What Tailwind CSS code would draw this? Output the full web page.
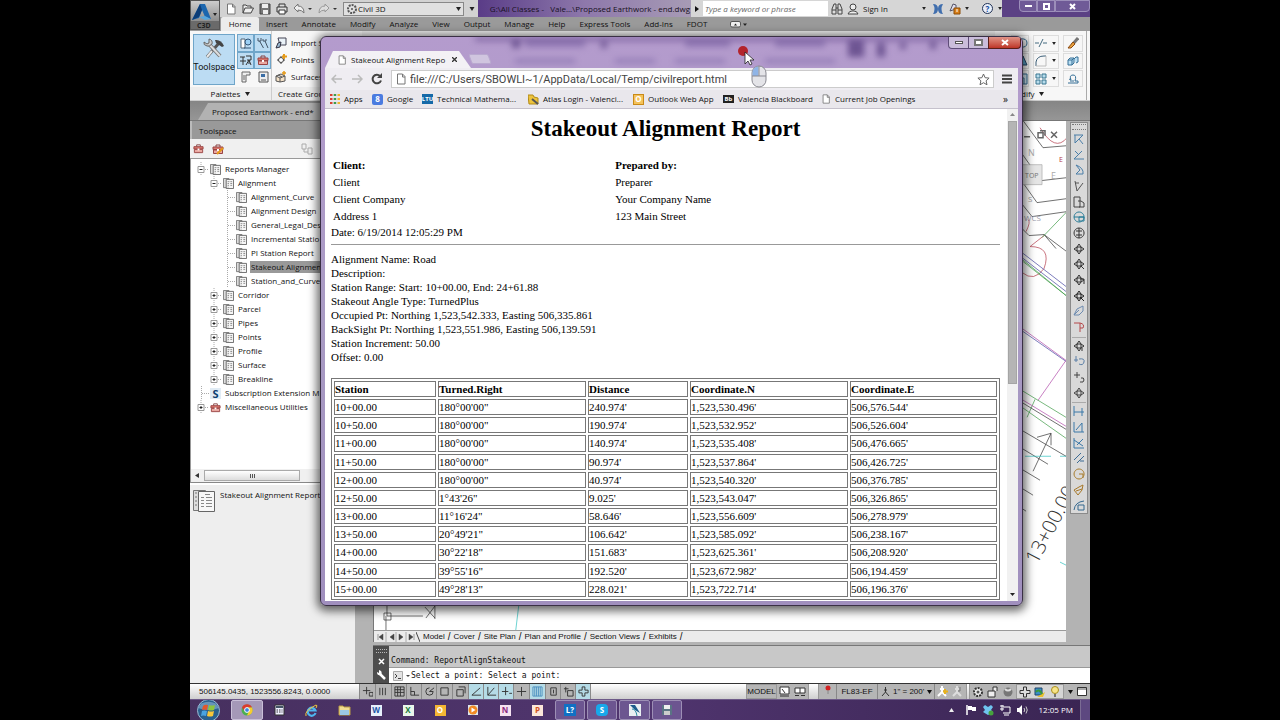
<!DOCTYPE html>
<html lang="en">

<head>
    <meta charset="UTF-8">
    <meta name="viewport" content="width=device-width, initial-scale=1.0">
    <title>Stakeout Alignment Report</title>
    <script src="https://cdn.jsdelivr.net/npm/@tailwindcss/browser@4"></script>
</head>

<body class="bg-black h-screen px-[190px] overflow-hidden font-['Open_Sans','Noto_Sans',sans-serif] text-[8px] leading-none text-[#111]">

    <!-- icon sprites -->
    <svg class="hidden" xmlns="http://www.w3.org/2000/svg">
        <symbol id="page" viewBox="0 0 12 12"><path d="M2.500 1h5L10 3.500V11H2.500zM7.500 1v3H10" fill="#fff" stroke="#777" /></symbol>
        <symbol id="report" viewBox="0 0 12 12"><path d="M.5 .5h6v10h-6z" fill="#ddd" stroke="#777" /><path d="M3.500 1.500h8v10h-8z" fill="#f6f6f6" stroke="#666" /><path d="M5 4h2M8 4h2M5 6h1.500M8 6h2M5 8h1.500M8 8h2M5 10h1" stroke="#888" /></symbol>
        <symbol id="toolbox" viewBox="0 0 12 12"><path d="M4 4V2h4v2" fill="none" stroke="#844" /><path d="M1 4h10v2.500H1z" fill="#d9766c" stroke="#944" /><path d="M1.500 7h9v3.500h-9z" fill="#eaa9a2" stroke="#944" /><path d="M5 6h2v2H5z" fill="#fff" /></symbol>
        <symbol id="cubes" viewBox="0 0 12 12"><path d="M1 5l2-2h4v5l-2 2H1zM1 5h4v5M5 5l2-2M7 4l2-2h2v5l-2 1" fill="#b9def2" stroke="#356f96" /></symbol>
        <symbol id="arc" viewBox="0 0 12 12"><path d="M1 11V7Q2 1 9 1h2" fill="none" stroke="#3c5f78" /><path d="M1 11h10V1" fill="none" stroke="#bbb" /></symbol>
        <symbol id="dash" viewBox="0 0 12 12"><path d="M0 6h4M8 6h4M4 10L8 2" stroke="#456a80" fill="none" /></symbol>
        <symbol id="array" viewBox="0 0 12 12"><path d="M1 1h4v4H1zM7 1h4v4H7zM1 7h4v4H1zM7 7h4v4H7z" fill="#b7dcec" stroke="#3b7690" /></symbol>
        <symbol id="offset" viewBox="0 0 12 12"><path d="M1 10h10V8H8q2-6-2-6T4 7L2 6M3 8h4" fill="none" stroke="#346f96" /></symbol>
    </svg>

    <main class="relative flex flex-col h-full overflow-hidden bg-[#b3b3b3]">

        <!-- title bar, quick access and ribbon tabs -->
        <header class="flex shrink-0 h-[31px] bg-[#9c9c9c]">
            <button type="button" aria-label="Application menu" class="w-[30px] h-[30px] shrink-0 flex items-center justify-center border border-[#555] bg-linear-to-b from-[#ccc] to-[#777]">
                <svg class="w-[28px] h-[28px]" viewBox="0 0 28 28">
                    <path d="M9 3h5l6 15h-5l-4-9-3 8-7 2z" fill="#1b66ae" />
                    <path d="M9 3l-8 16 7-3 3-7z" fill="#0c3d77" />
                    <path d="M8 16l6-1 6 3-6 1z" fill="#59a7dc" />
                    <path d="M22 12h4l-2 3z" fill="#222" />
                    <path d="M0 20h28v8H0z" fill="#6a6a6a" />
                    <text x="6" y="27" font-size="7" font-weight="700" fill="#222">C3D</text>
                </svg>
            </button>
            <div class="flex-1 min-w-0 flex flex-col">
                <div class="flex h-[17px] bg-[#5b4184]">
                    <div class="flex items-center gap-[5px] w-[258px] shrink-0 pl-[5px] bg-[#d2d2d2]">
                        <button type="button" aria-label="New"><svg class="size-3" viewBox="0 0 12 12"><use href="#page" /></svg></button>
                        <button type="button" aria-label="Open"><svg class="size-3" viewBox="0 0 12 12"><path d="M1 10V2h3l1 1h4v2M1 10l2-5h8.500l-2.500 5z" fill="#eee" stroke="#444" /></svg></button>
                        <button type="button" aria-label="Save"><svg class="size-3" viewBox="0 0 12 12"><path d="M1 1h10v10H1z" fill="#777" stroke="#444" /><path d="M3 1h6v4H3zM4 7h5v4H4z" fill="#eee" /></svg></button>
                        <button type="button" aria-label="Print"><svg class="size-3" viewBox="0 0 12 12"><path d="M3 4V1h6v3M1 4h10v5H1z" fill="#ddd" stroke="#333" /><path d="M3 7h6v4H3z" fill="#fff" stroke="#333" /></svg></button>
                        <button type="button" aria-label="Undo"><svg class="w-[20px] h-3" viewBox="0 0 20 12"><path d="M1 5l4-4v2q6 0 6 7-2-3-6-3v2z" fill="#eee" stroke="#777" /><path d="M15 5h4l-2 2z" fill="#333" /></svg></button>
                        <button type="button" aria-label="Redo"><svg class="w-[20px] h-3" viewBox="0 0 20 12"><path d="M11 5L7 1v2Q1 3 1 10q2-3 6-3v2z" fill="#ddd" stroke="#999" /><path d="M15 5h4l-2 2z" fill="#333" /></svg></button>
                        <div class="relative flex items-center flex-1 h-[14px] border border-[#888] bg-[#e0e0e0]">
                            <svg class="absolute left-[2px] size-3" viewBox="0 0 12 12"><circle cx="6" cy="6" r="4" fill="none" stroke="#555" stroke-width="2" stroke-dasharray="2 1" /><circle cx="6" cy="6" r="1" fill="#555" /></svg>
                            <select aria-label="Workspace" class="appearance-none w-full h-full pl-[14px] bg-transparent"><option>Civil 3D</option></select>
                            <svg class="absolute right-[2px] w-[5px] h-[4px]" viewBox="0 0 5 4"><path d="M0 0h5L2.500 4z" fill="#222" /></svg>
                        </div>
                        <svg class="w-[6px] h-[4px] mr-[3px]" viewBox="0 0 5 4"><path d="M0 0h5L2.500 4z" fill="#222" /></svg>
                    </div>
                    <div class="flex items-center justify-end w-[213px] shrink-0 pr-[1px] whitespace-pre bg-linear-to-r from-[#5a3c87] via-[#8e78ab] to-[#a79bb5] text-[#181122]">G:\All Classes -   Vale...\Proposed Earthwork - end.dwg</div>
                    <div class="flex items-center flex-1 max-w-[312px] bg-[#d6d6d6] whitespace-nowrap">
                        <svg class="w-[4px] h-[6px] mx-[4px] shrink-0" viewBox="0 0 4 6"><path d="M0 0v6l4-3z" fill="#111" /></svg>
                        <input type="text" aria-label="Search" placeholder="Type a keyword or phrase" class="w-[125px] h-[15px] px-[2px] bg-white italic placeholder:text-[#666]">
                        <button type="button" aria-label="Find" class="ml-[3px]"><svg class="size-3" viewBox="0 0 12 12"><path d="M1 11V6l2-5h2v10zM7 11V1h2l2 5v5zM5 5h2M1 7h4M7 7h4" fill="#ddd" stroke="#444" /></svg></button>
                        <button type="button" class="flex items-center gap-[4px] ml-[4px]"><svg class="size-3" viewBox="0 0 12 12"><circle cx="6" cy="4" r="3" fill="#eee" stroke="#444" /><path d="M1 11q1-3 4-3h2q3 0 4 3z" fill="#eee" stroke="#444" /></svg>Sign In</button>
                        <svg class="w-[4px] h-[3px] ml-[34px]" viewBox="0 0 5 4"><path d="M0 0h5L2.500 4z" fill="#222" /></svg>
                        <svg class="size-3 ml-[6px]" viewBox="0 0 12 12"><path d="M1 1q5 0 5 5 0-5 5-5-3 5 0 10-5 0-5-5 0 5-5 5 3-5 0-10" fill="#416fae" /></svg>
                        <svg class="size-3 ml-[5px]" viewBox="0 0 12 12"><path d="M1 8l3-7 3 1v4z" fill="#dde" stroke="#556" /><path d="M5 5h6v6H5z" fill="#d98019" stroke="#8c4c07" /><path d="M8 6v3" stroke="#fff" /></svg>
                        <svg class="w-[4px] h-[3px] ml-[4px]" viewBox="0 0 5 4"><path d="M0 0h5L2.500 4z" fill="#222" /></svg>
                        <button type="button" aria-label="Help" class="ml-[13px] size-[11px] rounded-full border border-[#235] bg-[#e8effa] text-[#124a9a] font-bold flex items-center justify-center">?</button>
                        <svg class="w-[4px] h-[3px] ml-[5px]" viewBox="0 0 5 4"><path d="M0 0h5L2.500 4z" fill="#222" /></svg>
                    </div>
                    <div class="flex items-start justify-end flex-1">
                        <button type="button" aria-label="Minimize" class="w-[18px] h-[12px] border border-[#9c8fba] rounded-bl-sm bg-[#6f5a97] flex items-center justify-center"><span class="w-[7px] h-[2px] bg-white"></span></button>
                        <button type="button" aria-label="Restore" class="w-[18px] h-[12px] border border-[#9c8fba] bg-[#6f5a97] flex items-center justify-center"><span class="w-[7px] h-[7px] border-2 border-white"></span></button>
                        <button type="button" aria-label="Close" class="w-[35px] h-[12px] border border-[#9c8fba] rounded-br-sm bg-[#6f5a97] flex items-center justify-center"><svg class="w-[7px] h-[7px]" viewBox="0 0 7 7"><path d="M1 1l5 5M6 1L1 6" stroke="#fff" stroke-width="2" /></svg></button>
                    </div>
                </div>
                <nav class="flex h-[14px] bg-[#9a9a9a] items-stretch">
                    <a href="#" class="flex items-center px-[7px] ml-[1px] w-[38px] justify-center bg-[#ececec] rounded-t-xs">Home</a>
                    <a href="#" class="flex items-center px-[7px]">Insert</a>
                    <a href="#" class="flex items-center px-[7px]">Annotate</a>
                    <a href="#" class="flex items-center px-[7px]">Modify</a>
                    <a href="#" class="flex items-center px-[7px]">Analyze</a>
                    <a href="#" class="flex items-center px-[7px]">View</a>
                    <a href="#" class="flex items-center px-[7px]">Output</a>
                    <a href="#" class="flex items-center px-[7px]">Manage</a>
                    <a href="#" class="flex items-center px-[7px]">Help</a>
                    <a href="#" class="flex items-center px-[7px]">Express Tools</a>
                    <a href="#" class="flex items-center px-[7px]">Add-Ins</a>
                    <a href="#" class="flex items-center px-[7px]">FDOT</a>
                    <button type="button" aria-label="Minimize ribbon" class="ml-[16px]"><svg class="w-[18px] h-[7px]" viewBox="0 0 18 7"><rect x="0.500" y="0.500" width="10" height="5.500" rx="1.500" fill="#eee" stroke="#555" /><path d="M4 4.500h3L5.500 2.500zM13 2.500h4L15 5z" fill="#222" /></svg></button>
                </nav>
            </div>
        </header>

        <section class="flex shrink-0 h-[70px] bg-[#f7f7f7] border-b border-[#ccc]">
            <div class="w-[82px] border-r border-[#ccc] flex flex-col">
                <div class="flex gap-[2px] pt-[3px] pl-[3px] h-[56px]">
                    <button type="button" class="w-[42px] h-[51px] border border-[#6fa5c9] bg-[#bcdcf3] flex flex-col items-center gap-[2px] pt-[2px]">
                        <svg class="w-[24px] h-[24px]" viewBox="0 0 24 24"><path d="M5 20L17 6" stroke="#555" stroke-width="3" /><path d="M13 3q6-1 9 6l-2 1-6-4z" fill="#444" /><path d="M6 6l12 13" stroke="#777" stroke-width="4" /><path d="M6 6l12 13" stroke="#ddd" stroke-width="2" /><path d="M2 5l3 2 2-1V2q4 1 3 5-3 3-5 2Q1 8 2 5" fill="#ccc" stroke="#666" /><path d="M5 20l5-6" stroke="#e8e8e8" stroke-width="2" /></svg>
                        <span class="text-[9px] font-['Roboto',sans-serif]">Toolspace</span>
                    </button>
                    <div class="grid grid-cols-2 w-[34px] h-[51px]">
                        <button type="button" aria-label="Panorama" class="border border-[#6fa5c9] bg-[#bcdcf3] flex items-center justify-center"><svg class="size-3" viewBox="0 0 12 12"><path d="M1 2h4v9H1z" fill="#fff" stroke="#567" /><circle cx="8" cy="5" r="3" fill="#9cd0f5" stroke="#357" /><path d="M4 11h7" stroke="#357" /></svg></button>
                        <button type="button" aria-label="Properties" class="border border-[#6fa5c9] bg-[#bcdcf3] flex items-center justify-center"><svg class="size-3" viewBox="0 0 12 12"><path d="M1 1v3h3V1M2.500 4l4 7M6 2v2h3V2M8 4l3 7" fill="none" stroke="#456" /></svg></button>
                        <button type="button" aria-label="Survey" class="border border-[#6fa5c9] bg-[#bcdcf3] flex items-center justify-center"><svg class="size-3" viewBox="0 0 12 12"><path d="M0 3h5M3 3v8M0 7h6M6 2h5v4H7M9 6l-3 5M9 6l2 5M9 6v4" fill="none" stroke="#333" /></svg></button>
                        <button type="button" aria-label="Toolbox" class="border border-[#6fa5c9] bg-[#bcdcf3] flex items-center justify-center"><svg class="size-3"><use href="#toolbox" /></svg></button>
                        <button type="button" aria-label="Design Center" class="flex items-center justify-center"><svg class="size-3" viewBox="0 0 12 12"><path d="M2 1h8v3H6v7H2zM4 4v5" fill="#eee" stroke="#666" /></svg></button>
                        <button type="button" aria-label="Tool Palettes" class="flex items-center justify-center"><svg class="size-3" viewBox="0 0 12 12"><path d="M2 1h9v10H2z" fill="#eee" stroke="#555" /><path d="M4 3h4v3H4z" fill="#3b6ea5" /><path d="M4 9h5" stroke="#555" /></svg></button>
                    </div>
                </div>
                <div class="flex-1 flex items-center justify-center gap-[5px] bg-[#ededed]">Palettes <svg class="w-[5px] h-[4px]" viewBox="0 0 5 4"><path d="M0 0h5L2.500 4z" fill="#222" /></svg></div>
            </div>
            <div class="w-[90px] flex flex-col">
                <div class="h-[56px] pt-[3px] pl-[3px] flex flex-col whitespace-nowrap">
                    <button type="button" class="flex-1 flex items-center gap-[4px]"><svg class="size-3" viewBox="0 0 12 12"><path d="M3 1h8v7H5z" fill="#eaf2f8" stroke="#445" /><path d="M1 11l4-1 1-5-3 1z" fill="#9bb9d0" stroke="#334" /></svg>Import S</button>
                    <button type="button" class="flex-1 flex items-center gap-[4px]"><svg class="size-3" viewBox="0 0 12 12"><path d="M6 2v8M2 6h8" stroke="#444" /><circle cx="6" cy="6" r="2.500" fill="#fff" stroke="#444" /><path d="M9 0v5M7 2.500h5" stroke="#e59b19" stroke-width="2" /></svg>Points</button>
                    <button type="button" class="flex-1 flex items-center gap-[4px] pb-[2px]"><svg class="size-3" viewBox="0 0 12 12"><path d="M1 5l5-2 4 2v5l-5 1-4-1zM1 5l4 2 5-2M5 7v4M3 4l4 2" fill="#f4e2c8" stroke="#555" /><path d="M9 0v4M7 2h4" stroke="#e59b19" stroke-width="1.500" /></svg>Surfaces</button>
                </div>
                <div class="flex-1 flex items-center pl-[6px] bg-[#ededed] whitespace-nowrap">Create Grou</div>
            </div>
            <div class="flex-1 bg-[#ededed]"></div>
            <div class="w-[92px] flex flex-col mr-[3px] border-r border-[#aaa]">
                <div class="h-[56px] pt-[4px] pr-[3px] grid grid-cols-[18px_26px_20px] gap-x-[4px] gap-y-[1px] justify-end">
                    <button type="button" aria-label="Rotate" class="border border-[#ddd] flex items-center justify-end"><svg class="w-[9px] h-3" viewBox="0 0 9 12"><path d="M1 2q7-1 7 4T1 10" fill="none" stroke="#356f96" /></svg></button>
                    <button type="button" aria-label="Trim" class="border border-[#ddd] flex items-center gap-[5px] pl-[1px]"><svg class="size-3"><use href="#dash" /></svg><svg class="w-[4px] h-[3px]" viewBox="0 0 5 4"><path d="M0 0h5L2.500 4z" fill="#222" /></svg></button>
                    <button type="button" aria-label="Erase" class="border border-[#ddd] flex items-center justify-center"><svg class="size-3" viewBox="0 0 12 12"><path d="M11 1L5 8" stroke="#777" stroke-width="3" /><path d="M6 5l2 2-4 4H1z" fill="#e9a13e" stroke="#8b4a12" /></svg></button>
                    <button type="button" aria-label="Mirror" class="border border-[#ddd] flex items-center justify-end"><svg class="w-[9px] h-3" viewBox="0 0 9 12"><path d="M2 10h6L4 1z" fill="#5ba8cf" stroke="#246" /></svg></button>
                    <button type="button" aria-label="Fillet" class="border border-[#ddd] flex items-center gap-[5px] pl-[1px]"><svg class="size-3"><use href="#arc" /></svg><svg class="w-[4px] h-[3px]" viewBox="0 0 5 4"><path d="M0 0h5L2.500 4z" fill="#222" /></svg></button>
                    <button type="button" aria-label="Explode" class="border border-[#ddd] flex items-center justify-center"><svg class="size-3"><use href="#cubes" /></svg></button>
                    <button type="button" aria-label="Scale" class="border border-[#ddd] flex items-center justify-end"><svg class="w-[9px] h-3" viewBox="0 0 9 12"><path d="M1 1h7v10H1zM1 5h4v6" fill="#d7ecf7" stroke="#356f96" /></svg></button>
                    <button type="button" aria-label="Array" class="border border-[#ddd] flex items-center gap-[5px] pl-[1px]"><svg class="size-3"><use href="#array" /></svg><svg class="w-[4px] h-[3px]" viewBox="0 0 5 4"><path d="M0 0h5L2.500 4z" fill="#222" /></svg></button>
                    <button type="button" aria-label="Offset" class="border border-[#ddd] flex items-center justify-center"><svg class="size-3"><use href="#offset" /></svg></button>
                </div>
                <div class="flex-1 flex items-center pl-[14px] gap-[4px]">Modify <svg class="w-[5px] h-[4px]" viewBox="0 0 5 4"><path d="M0 0h5L2.500 4z" fill="#222" /></svg></div>
            </div>
        </section>

        <!-- drawing tabs -->
        <div class="shrink-0 flex h-[20px] pt-[2px] pl-[8px] bg-linear-to-b from-[#858585] to-[#969696] border-b border-[#777]">
            <div class="flex items-center w-[140px] pl-[14px] bg-[#b2b2b2] rounded-t-xs [clip-path:polygon(10px_0,100%_0,100%_100%,0_100%)]">Proposed Earthwork - end*</div>
        </div>

        <!-- toolspace, drawing area and command line -->
        <div class="flex-1 min-h-0 flex">
            <aside class="w-[165px] shrink-0 flex flex-col bg-[#eee]">
                <h2 class="h-[18px] pt-[2px] pl-[7px] flex items-center bg-[#999] border-l-2 border-[#bbb]">Toolspace</h2>
                <div class="h-[20px] shrink-0 flex items-center gap-[8px] pl-[3px] pr-[42px] bg-[#f0f0f0] border-b border-[#999]">
                    <svg class="size-[11px]"><use href="#toolbox" /></svg>
                    <svg class="size-[12px]" viewBox="0 0 12 12"><use href="#toolbox" /><path d="M5 11l6-6" stroke="#e59b19" stroke-width="2" /></svg>
                    <svg class="size-[12px] ml-auto" viewBox="0 0 12 12"><path d="M1 1h4v5H1zM7 5h4v6H7zM3 6v3h4" fill="none" stroke="#aaa" /></svg>
                </div>
                <ul id="reportTree" class="flex-1 min-h-0 pt-[3px] bg-white border-l border-[#999]"></ul>
                <div class="h-[14px] shrink-0 flex items-center bg-[#f0f0f0] border-b border-[#888] border-l border-l-[#999]">
                    <svg class="w-[4px] h-[5px] ml-[4px] mr-[5px]" viewBox="0 0 4 5"><path d="M4 0v5L0 2.500z" fill="#333" /></svg>
                    <div class="w-[96px] h-[11px] border border-[#aaa] bg-linear-to-b from-white to-[#ddd] flex items-center justify-center gap-[1px]">
                        <span class="w-px h-[4px] bg-[#555]"></span><span class="w-px h-[4px] bg-[#555]"></span><span class="w-px h-[4px] bg-[#555]"></span>
                    </div>
                </div>
                <div class="h-[200px] shrink-0 flex gap-[5px] pt-[5px] pl-[3px] whitespace-nowrap border-t-2 border-white">
                    <svg class="w-[22px] h-[22px] shrink-0" viewBox="0 0 22 22"><path d="M.5 .5h12v20H.5z" fill="#ddd" stroke="#777" /><path d="M2 3h2M2 7h2M2 11h2M2 15h2" stroke="#777" /><path d="M5.500 1.500h16v20h-16z" fill="#f8f8f8" stroke="#666" /><path d="M12 4.500h5M8 7.500h3M13 7.500h6M8 10.500h3M13 10.500h6M8 13.500h3M13 13.500h6M8 16.500h3M13 16.500h6" stroke="#888" /></svg>
                    <span class="pt-[1px]">Stakeout Alignment Report</span>
                </div>
            </aside>

            <div class="flex-1 min-w-0 ml-[18px] flex flex-col">
                <div class="flex-1 min-h-0 flex">
                    <div class="flex-1 flex flex-col mb-[3px] border-l border-[#777]">
                        <svg class="flex-1 min-h-0 w-full bg-white" viewBox="373 121 693 510" preserveAspectRatio="xMaxYMax slice" fill="none" stroke="#333" stroke-width="0.700">
                            <path d="M1015 110l28 38 24-2M1012 140l29 41 26-3M1010 165l27 38 30-4M1012 192l20 25 35-5M1020 227l9 9 15-1 24 18M1044 235l12 14" />
                            <path d="M1040 128q15 25 27 10M1030 247l14-11M1030 247q22 0 14 22-10 14-22 4M1026 232q5-10 2-12" stroke="#b23a4a" />
                            <path d="M1042 238l25-26M1020 258l46 38M1023 262l43 34M1020 390l46 28M1022 408l44 31M1035 400l-8 18" stroke="#3d9a45" />
                            <path d="M1018 250l48 37M1018 255l48 37M1020 330l46 32" stroke="#4444a0" />
                            <path d="M1018 326l48 35-28 40M1020 399l46 28" stroke="#b04aa8" />
                            <path d="M1020 402l46 28M1020 430l46 27M1020 448l28 17M1020 469l20 12M1020 488l13 8M1020 508l6 4M1033 472l18-38M1037 438l14-4v12" />
                            <path d="M1025 457h26M1060 457h6M1060 563l6 3M518 606l-3 25" stroke="#2cc0be" />
                            <path d="M383 614h7v7h-7zM386 600v17h36M385 617v14M424 608l10 11M434 607l-9 12M434 607v13" />
                            <path d="M1021 165h21v20h-19" fill="#e5e5e5" stroke="#aaa" />
                            <text x="1025" y="178" font-size="7" fill="#777" stroke="none">TOP</text>
                            <text x="1028" y="156" font-size="9" fill="#aaa" stroke="none">N</text>
                            <text x="1051" y="179" font-size="9" fill="#aaa" stroke="none">E</text>
                            <text x="1028" y="202" font-size="8" fill="#999" stroke="none">S</text>
                            <text x="1059" y="162" font-size="7" fill="#b23a4a" stroke="none">E</text>
                            <text x="1024" y="221" font-size="8" fill="#99a" stroke="none">WCS</text>
                            <path d="M1024 137h6M1038 133h5v5h-5zM1040 131h5v5M1051 132l6 6M1057 132l-6 6" stroke="#666" stroke-width="1.500" />
                            <text transform="translate(1037 566) rotate(-62)" font-size="20" font-family="Open Sans" font-weight="300" fill="#333" stroke="none">13+00.00</text>
                        </svg>
                        <nav class="h-[12px] shrink-0 flex items-center bg-[#ebebeb] border-t border-[#999] text-[8px] font-['Liberation_Sans',sans-serif] whitespace-nowrap">
                            <svg class="w-[42px] h-[10px]" viewBox="0 0 42 10"><path d="M4 2v6M9 2v6L5 5zM20 2v6l-4-3zM25 2v6l4-3zM35 2v6l4-3zM40 2v6" fill="#444" stroke="#444" stroke-width=".5" /><path d="M12 0v10M22 0v10M32 0v10" stroke="#aaa" /></svg>
                            <svg class="w-[4px] h-[10px]" viewBox="0 0 4 10"><path d="M0 0l4 10" stroke="#444" /></svg>
                            <a href="#" class="px-[3px]">Model</a><span class="text-[10px]">/</span>
                            <a href="#" class="px-[3px]">Cover</a><span class="text-[10px]">/</span>
                            <a href="#" class="px-[3px]">Site Plan</a><span class="text-[10px]">/</span>
                            <a href="#" class="px-[3px]">Plan and Profile</a><span class="text-[10px]">/</span>
                            <a href="#" class="px-[3px]">Section Views</a><span class="text-[10px]">/</span>
                            <a href="#" class="px-[3px]">Exhibits</a><span class="text-[10px]">/</span>
                        </nav>
                    </div>
                    <div class="w-[24px] shrink-0 pl-[4px] pt-[1px]">
                        <div class="w-[18px] h-[392px] flex flex-col bg-[#d9d9d9] border border-[#8a8a8a]">
                            <div class="h-[6px] m-[1px] border-y border-dotted border-[#777]"></div>
                            <div id="drawTools" class="flex-1 min-h-0 flex flex-col items-center"></div>
                        </div>
                    </div>
                </div>
                <div class="h-[38px] shrink-0 flex border-t border-[#777] font-['DejaVu_Sans_Mono',monospace] text-[8px]">
                    <div class="w-[16px] flex flex-col items-center gap-[5px] pt-[3px] bg-[#4d4d4d]">
                        <span class="w-[11px] h-[4px] border-y border-dotted border-[#bbb]"></span>
                        <svg class="w-[7px] h-[7px]" viewBox="0 0 7 7"><path d="M1 1l5 5M6 1L1 6" stroke="#fff" stroke-width="1.500" /></svg>
                        <svg class="w-[10px] h-[10px]" viewBox="0 0 10 10"><path d="M4 4l5 5" stroke="#fff" stroke-width="2.500" /><path d="M1 2l2 1V0q4 1 2 5Q1 6 1 2" fill="#fff" /></svg>
                    </div>
                    <div class="flex-1 flex flex-col">
                        <div class="flex-1 flex items-end pb-[2px] pl-[2px] bg-[#c8c8c8]">Command: ReportAlignStakeout</div>
                        <div class="h-[16px] flex items-center pl-[4px] bg-white border-t border-[#999]">
                            <svg class="w-[18px] h-[10px] shrink-0" viewBox="0 0 18 10"><path d="M0.500 0.500h9v9h-9z" fill="#e4e4e4" stroke="#aaa" /><path d="M2 3l2 2-2 2M5 7.500h3" fill="none" stroke="#444" /><path d="M13 4h4l-2 2z" fill="#444" /></svg>
                            <input type="text" aria-label="Command line" value="Select a point: Select a point:" class="flex-1 bg-transparent">
                        </div>
                    </div>
                </div>
            </div>
        </div>

        <!-- status bar -->
        <footer class="h-[16px] shrink-0 flex items-stretch border-t border-[#333] bg-linear-to-b from-white to-[#cfcfcf] text-[8px] font-['Liberation_Sans',sans-serif]">
            <div class="w-[170px] pl-[9px] flex items-center border-r border-[#888]">506145.0435, 1523556.8243, 0.0000</div>
            <div id="modeButtons" class="flex"></div>
            <div class="flex-1"></div>
            <button type="button" class="w-[31px] border border-[#999] bg-[#b5b5b5]">MODEL</button>
            <button type="button" aria-label="Layout" class="w-[15px] bg-[#b5b5b5] flex items-center justify-center"><svg class="w-[11px] h-[11px]" viewBox="0 0 11 11"><path d="M1 1h9v7H1zM1 10h9M3 3l3 4" fill="#fff" stroke="#333" /></svg></button>
            <button type="button" aria-label="Quick view" class="w-[16px] bg-[#b5b5b5] flex items-center justify-center"><svg class="w-[12px] h-[10px]" viewBox="0 0 12 10"><path d="M1 1h10v5H1zM6 1v5M1 8.500h4M7 8.500h4" fill="#fff" stroke="#333" /></svg></button>
            <div class="w-[11px] border-x border-[#999]"></div>
            <div class="w-[17px] bg-[#b5b5b5] flex justify-center"><svg class="w-[8px] h-[10px]" viewBox="0 0 8 10"><circle cx="4" cy="4" r="2.500" fill="#d32222" /><path d="M4 6v4" stroke="#888" /></svg></div>
            <div class="w-[42px] flex items-center justify-center bg-[#b5b5b5] border-x border-[#888]">FL83-EF</div>
            <div class="w-[57px] flex items-center gap-[3px] pl-[3px] bg-[#b5b5b5] border-r border-[#888] whitespace-nowrap">
                <svg class="size-[9px]" viewBox="0 0 9 9"><path d="M4.500 0v5L1 9M4.500 5L8 9M3 3h3" fill="none" stroke="#333" /></svg>1" = 200'
                <svg class="w-[5px] h-[4px]" viewBox="0 0 5 4"><path d="M0 0h5L2.500 4z" fill="#111" /></svg>
            </div>
            <div class="flex items-center gap-[4px] px-[2px] w-[31px] bg-[#b5b5b5]">
                <svg class="size-[11px]" viewBox="0 0 11 11"><path d="M5 0v6L1 10M5 6l4 4M3 3h4" fill="none" stroke="#fff" stroke-width="2" /><path d="M8 3v5M6 5.500h5" stroke="#e7b21d" stroke-width="2" /></svg>
                <svg class="size-[11px]" viewBox="0 0 11 11"><path d="M5 0v6L1 10M5 6l4 4M3 3h4" fill="none" stroke="#ddd" stroke-width="2" /><path d="M8 1v4H6" stroke="#777" fill="none" /></svg>
            </div>
            <div class="w-[4px] border-x border-[#999]"></div>
            <div class="flex items-center gap-[3px] px-[2px] w-[46px] bg-[#b5b5b5]">
                <svg class="size-[12px]" viewBox="0 0 12 12"><circle cx="6" cy="6" r="4" fill="#eee" stroke="#333" stroke-width="2" stroke-dasharray="2 1" /><circle cx="6" cy="6" r="1.500" fill="#555" /></svg>
                <svg class="size-[12px]" viewBox="0 0 12 12"><path d="M1 5h7v6H1zM6 5V1h4v4" fill="#eee" stroke="#333" /></svg>
                <svg class="size-[12px]" viewBox="0 0 12 12"><circle cx="6" cy="6" r="4.500" fill="#777" /><path d="M3 3q3 3 6 0" stroke="#ddd" stroke-width="2" fill="none" /></svg>
            </div>
            <div class="flex items-center gap-[3px] px-[2px] w-[48px] bg-[#d5d5d5] border border-[#999]">
                <svg class="size-[12px]" viewBox="0 0 12 12"><path d="M4.500 1h3v3.500H11v3H7.500V11h-3V7.500H1v-3h3.500z" fill="#ddd" stroke="#333" /></svg>
                <svg class="size-[12px]" viewBox="0 0 12 12"><path d="M1 2h7v7H1z" fill="#3a8fc9" stroke="#246" /><path d="M3 11l8-5-2 5z" fill="#e8c12c" /><path d="M2 6q3-4 6 2" stroke="#3a9a3a" stroke-width="2" fill="none" /></svg>
                <svg class="size-[12px]" viewBox="0 0 12 12"><circle cx="6" cy="4" r="3.500" fill="#f7e488" stroke="#a98e1c" /><path d="M5 8h2v3H5z" fill="#777" /></svg>
            </div>
            <div class="flex items-center gap-[4px] pl-[4px] pr-[3px] bg-[#b5b5b5]">
                <svg class="w-[5px] h-[4px]" viewBox="0 0 5 4"><path d="M0 0h5L2.500 4z" fill="#111" /></svg>
                <svg class="w-[10px] h-[9px]" viewBox="0 0 10 9"><path d="M.5 .5h9v8h-9z" fill="#fff" stroke="#333" /><path d="M1 2h8" stroke="#555" /></svg>
            </div>
        </footer>

        <!-- taskbar -->
        <div class="h-[21px] shrink-0 flex items-center bg-linear-to-r from-[#47305f] via-[#50356f] to-[#3a2553] border-t border-[#6d5a88]">
            <button type="button" aria-label="Start" class="w-[41px] pl-[6px]">
                <svg class="w-[25px] h-[21px]" viewBox="0 0 25 21"><circle cx="12.500" cy="10.500" r="11" fill="#29608f" stroke="#9bb9d3" /><path d="M2 8a11 9 0 0 1 21 0q-10 4-21 0" fill="#8fb8d6" opacity=".6" /><path d="M7 6q2-2 5-1l-1 5q-3-1-5 0z" fill="#e2562b" /><path d="M13 5q3 1 6 0l-1 5q-3 1-6 0z" fill="#8cc63e" /><path d="M6 11q2-1 5 0l-1 5q-3-1-5 0z" fill="#4aa3e0" /><path d="M12 11q3 1 6 0l-1 5q-3 1-6 0z" fill="#f8c73a" /></svg>
            </button>
            <button type="button" aria-label="Chrome" class="w-[32px] h-[20px] flex items-center justify-center border border-[#c9bfd8] rounded-xs bg-[#a598b8]">
                <svg class="size-[12px]" viewBox="0 0 12 12"><circle cx="6" cy="6" r="5.500" fill="#4caf50" /><path d="M1 3.500A5.500 5.500 0 0 1 11 3.500H6L3.500 7z" fill="#dc3b2d" /><path d="M11 3.500A5.500 5.500 0 0 1 6 11.500L8 7 6 3.500z" fill="#f7cc2e" /><circle cx="6" cy="6" r="2.400" fill="#3d84e0" stroke="#fff" /></svg>
            </button>
            <button type="button" aria-label="Calculator" class="w-[32px] flex justify-center"><svg class="size-[12px]" viewBox="0 0 12 12"><path d="M2 1h9v10H2z" fill="#eef" stroke="#333" /><path d="M3 2h7v2H3z" fill="#456" /><path d="M3.500 6h6M3.500 8h6" stroke="#333" stroke-dasharray="1.500 1" /></svg></button>
            <button type="button" aria-label="Internet Explorer" class="w-[33px] flex justify-center"><svg class="size-[13px]" viewBox="0 0 13 13"><path d="M10.500 9A4 4 0 1 1 10.500 6.500H3" fill="none" stroke="#4eb6f0" stroke-width="2.200" /><path d="M1 12Q-1 7 11 1q2 0 0 3" fill="none" stroke="#f3c73a" /></svg></button>
            <button type="button" aria-label="Explorer" class="w-[32px] flex justify-center"><svg class="size-[13px]" viewBox="0 0 13 13"><path d="M1 2h4l1 1h6v8H1z" fill="#f0dc92" stroke="#b89b45" /><path d="M2 6h9v5H2z" fill="#9cc9e6" /></svg></button>
            <button type="button" aria-label="Word" class="w-[32px] flex justify-center"><span class="size-[11px] bg-[#e8f0fb] text-[#1f56a6] font-bold flex items-center justify-center">W</span></button>
            <button type="button" aria-label="Excel" class="w-[32px] flex justify-center"><span class="size-[11px] bg-[#e8f6ea] text-[#1c7a3c] font-bold flex items-center justify-center">X</span></button>
            <button type="button" aria-label="Outlook" class="w-[32px] flex justify-center"><span class="size-[11px] bg-[#f5b633] text-white font-bold flex items-center justify-center">O</span></button>
            <button type="button" aria-label="Media player" class="w-[33px] flex justify-center"><svg class="size-[12px]" viewBox="0 0 12 12"><path d="M1 1h10v10H1z" fill="#dce7ef" /><circle cx="6" cy="6" r="4.500" fill="#f08a24" /><path d="M4.500 3.500v5l4-2.500z" fill="#fff" /></svg></button>
            <button type="button" aria-label="OneNote" class="w-[32px] flex justify-center"><span class="size-[11px] bg-[#f5e2f1] text-[#8b2a80] font-bold flex items-center justify-center">N</span></button>
            <button type="button" aria-label="PowerPoint" class="w-[33px] flex justify-center"><span class="size-[11px] bg-[#fbe6d9] text-[#d2521c] font-bold flex items-center justify-center">P</span></button>
            <div class="flex gap-[2px] pl-px h-[20px]">
                <button type="button" aria-label="Lync" class="w-[30px] flex items-center justify-center border border-[#9d8fb5] rounded-xs bg-[#6c5590]"><span class="size-[12px] bg-[#1070c4] text-white font-bold text-[8px] flex items-center justify-center">L?</span></button>
                <button type="button" aria-label="Skype" class="w-[30px] flex items-center justify-center border border-[#9d8fb5] rounded-xs bg-[#6c5590]"><span class="size-[12px] rounded-sm bg-[#18a8ea] text-white font-bold flex items-center justify-center">S</span></button>
                <button type="button" aria-label="Civil 3D" class="w-[31px] flex items-center justify-center border border-[#9d8fb5] rounded-xs bg-[#6c5590]"><svg class="size-[12px]" viewBox="0 0 12 12"><path d="M0 0h12v12H0z" fill="#e9eef2" /><path d="M1 1h5l5 8-5-3z" fill="#1b5b8c" /><path d="M3 5q4 0 5 7" stroke="#2a8aa3" fill="none" /></svg></button>
                <button type="button" aria-label="Recorder" class="w-[30px] flex items-center justify-center border border-[#9d8fb5] rounded-xs bg-[#6c5590]"><svg class="size-[12px]" viewBox="0 0 12 12"><path d="M1 1h10v10H1z" fill="#5a7484" /><path d="M3 1h6v4H3z" fill="#eee" /><path d="M3 7h6v4H3z" fill="#ccc" /></svg></button>
            </div>
            <div class="flex-1 flex items-center justify-end gap-[5px] pr-[7px] text-white">
                <svg class="w-[5px] h-[4px] mr-[6px]" viewBox="0 0 5 4"><path d="M0 4h5L2.500 0z" fill="#eee" /></svg>
                <svg class="size-[12px]" viewBox="0 0 12 12"><path d="M2 1v10" stroke="#fff" stroke-width="1.500" /><path d="M3 2h4v1h4v4H7V6H3z" fill="#fff" /></svg>
                <svg class="size-[12px]" viewBox="0 0 12 12"><path d="M3 1l3 2 3-2 2 2-2 3 2 2-5 3-5-3 2-2-2-3z" fill="#6fc3ee" /><circle cx="9" cy="9" r="2.500" fill="#46a33c" /></svg>
                <svg class="size-[12px]" viewBox="0 0 12 12"><path d="M4 3h7v6H4M3 1v6M1 2h4M1 5h4M5 11h5" fill="none" stroke="#fff" /></svg>
                <svg class="size-[12px]" viewBox="0 0 12 12"><path d="M1 4h2l3-3v10L3 8H1z" fill="#fff" /><path d="M8 4q1.500 2 0 4M10 2.500q2.500 3.500 0 7" fill="none" stroke="#ccc" /></svg>
                <span class="ml-[6px]">12:05 PM</span>
            </div>
            <button type="button" aria-label="Show desktop" class="w-[10px] h-full border-l border-[#7b6c94] bg-[#5d4880]"></button>
        </div>

        <!-- browser window -->
        <section class="absolute left-[130px] right-[67px] top-[36px] bottom-[114px] flex flex-col rounded-md border border-[#3a3045] bg-linear-to-b from-[#b49bcd] via-[#a99bc4] to-[#a08fbe] shadow-[0_2px_10px_3px_rgba(0,0,0,0.6)] px-[4px] pb-[4px] overflow-hidden">
            <div class="relative h-[31px] shrink-0 flex items-end">
                <svg class="absolute inset-0 w-full h-full blur-[3px]" viewBox="0 0 693 31" preserveAspectRatio="none"><path d="M150 0h540v4H150z" fill="#7d63a0" /><path d="M200 7h60M360 7h45M450 7h50" stroke="#8f76b2" stroke-width="6" /><path d="M190 24h60M290 24h40M350 24h50M440 24h70" stroke="#9079b4" stroke-width="4" /><path d="M187 4h8v7h-8zM276 5h6v6h-6zM523 4h16v16h-16zM552 6h8v14h-8zM575 6h6v6h-6zM605 5h6v7h-6z" fill="#6d5492" /></svg>
                <div class="relative flex items-center gap-[4px] w-[146px] h-[17px] pl-[12px] pr-[10px] bg-[#f3f1f5] [clip-path:polygon(8px_0,134px_0,100%_100%,0_100%)] whitespace-nowrap">
                    <svg class="size-[10px] shrink-0"><use href="#page" /></svg>
                    <span class="flex-1">Stakeout Alignment Repo</span>
                    <button type="button" aria-label="Close tab" class="mr-[4px]"><svg class="w-[5px] h-[5px]" viewBox="0 0 5 5"><path d="M0 0l5 5M5 0L0 5" stroke="#333" stroke-width="1.300" /></svg></button>
                </div>
                <button type="button" aria-label="New tab" class="relative w-[20px] h-[10px] mb-[4px] ml-[-1px] bg-[#d0c5df] border border-[#b9a9cf] rounded-xs skew-x-[20deg]"></button>
                <div class="absolute right-[-3px] top-0 flex h-[12px]">
                    <button type="button" aria-label="Minimize" class="w-[21px] flex items-center justify-center border border-[#5e4d78] border-t-0 rounded-bl-sm bg-[#cabddb]"><span class="w-[8px] h-[3px] bg-white border border-[#555]"></span></button>
                    <button type="button" aria-label="Maximize" class="w-[19px] flex items-center justify-center border-b border-[#5e4d78] bg-[#cabddb]"><span class="w-[9px] h-[7px] bg-white border-2 border-[#777]"></span></button>
                    <button type="button" aria-label="Close" class="w-[33px] flex items-center justify-center border border-[#5a1f1a] border-t-0 rounded-br-sm bg-linear-to-b from-[#e09286] to-[#bd3427]"><svg class="w-[8px] h-[7px]" viewBox="0 0 8 7"><path d="M1 1l6 5M7 1L1 6" stroke="#fff" stroke-width="2" /></svg></button>
                </div>
            </div>
            <div class="h-[22px] shrink-0 flex items-center gap-[8px] px-[6px] bg-[#efedf2]">
                <button type="button" aria-label="Back"><svg class="size-[12px]" viewBox="0 0 12 12"><path d="M11 6H1M5 2L1 6l4 4" fill="none" stroke="#bbb" stroke-width="1.500" /></svg></button>
                <button type="button" aria-label="Forward"><svg class="size-[12px]" viewBox="0 0 12 12"><path d="M1 6h10M7 2l4 4-4 4" fill="none" stroke="#bbb" stroke-width="1.500" /></svg></button>
                <button type="button" aria-label="Reload"><svg class="size-[12px]" viewBox="0 0 12 12"><path d="M10 7.500A4.300 4.300 0 1 1 9 3" fill="none" stroke="#444" stroke-width="2" /><path d="M11 0v5H6z" fill="#444" /></svg></button>
                <div class="flex-1 flex items-center gap-[3px] h-[18px] pl-[3px] pr-[3px] bg-white border border-[#ccc]">
                    <svg class="size-[12px] shrink-0"><use href="#page" /></svg>
                    <input type="text" aria-label="Address" value="file:///C:/Users/SBOWLI~1/AppData/Local/Temp/civilreport.html" class="flex-1 font-['Roboto',sans-serif] text-[11px] text-[#444]">
                    <svg class="size-[13px]" viewBox="0 0 13 13"><path d="M6.500 1l1.600 3.700 4 .4-3 2.700.9 4-3.500-2.100L3 11.800l.9-4-3-2.700 4-.4z" fill="#fff" stroke="#666" /></svg>
                </div>
                <button type="button" aria-label="Menu"><svg class="w-[10px] h-[10px]" viewBox="0 0 10 10"><path d="M0 1.500h10M0 5h10M0 8.500h10" stroke="#444" stroke-width="2" /></svg></button>
            </div>
            <nav class="h-[19px] shrink-0 flex items-center pl-[5px] pr-[10px] bg-[#e9e7ec] border-b border-[#c5c1cc] whitespace-nowrap">
                <a href="#" class="flex items-center gap-[4px] w-[42px]"><svg class="size-[10px]" viewBox="0 0 10 10"><path d="M0 1h2.500M0 5h2.500M0 9h2.500" stroke="#d9402f" stroke-width="2" /><path d="M3.700 1h2.500M3.700 5h2.500M3.700 9h2.500" stroke="#3f9a4b" stroke-width="2" /><path d="M7.500 1H10M7.500 5H10M7.500 9H10" stroke="#efb52a" stroke-width="2" /></svg>Apps</a>
                <a href="#" class="flex items-center gap-[4px] w-[50px]"><span class="size-[11px] rounded-xs bg-[#4a7be0] text-white font-bold flex items-center justify-center">8</span>Google</a>
                <a href="#" class="flex items-center gap-[4px] w-[106px]"><span class="w-[11px] h-[10px] bg-[#1469a8] text-white text-[6px] font-bold flex items-center justify-center">LTU</span>Technical Mathema...</a>
                <a href="#" class="flex items-center gap-[4px] w-[105px]"><svg class="size-[11px]" viewBox="0 0 11 11"><path d="M0 1h5l1 2 4 1v6H1z" fill="#edc33c" stroke="#b28a16" /><path d="M4 5l6 5" stroke="#555" stroke-width="2" /></svg>Atlas Login - Valenci...</a>
                <a href="#" class="flex items-center gap-[4px] w-[90px]"><span class="size-[11px] bg-[#f4c25a] border border-[#c98a17] text-white font-bold text-[8px] flex items-center justify-center">O</span>Outlook Web App</a>
                <a href="#" class="flex items-center gap-[4px] w-[98px]"><span class="w-[11px] h-[8px] bg-[#222] text-white text-[6px] font-bold flex items-center justify-center">Bb</span>Valencia Blackboard</a>
                <a href="#" class="flex items-center gap-[4px]"><svg class="size-[10px]"><use href="#page" /></svg>Current Job Openings</a>
                <span class="ml-auto text-[10px]">»</span>
            </nav>
            <div class="flex-1 min-h-0 flex bg-white">
                <article class="flex-1 min-w-0 overflow-hidden pt-[7px] pl-[6px] pr-[7px] font-['Liberation_Serif',serif] text-[11px] leading-[14px] text-black">
                    <h1 class="text-center text-[23px] leading-[26px] font-bold">Stakeout Alignment Report</h1>
                    <dl class="grid grid-cols-[11fr_15fr] gap-y-[3px] mt-[16px] pl-[2px]">
                        <dt class="font-bold">Client:</dt><dt class="font-bold">Prepared by:</dt>
                        <dd>Client</dd><dd>Preparer</dd>
                        <dd>Client Company</dd><dd>Your Company Name</dd>
                        <dd>Address 1</dd><dd>123 Main Street</dd>
                    </dl>
                    <p class="mt-[2px]">Date: 6/19/2014 12:05:29 PM</p>
                    <hr class="mt-[5px] mb-[7px] border-[#999]">
                    <p>Alignment Name: Road</p>
                    <p>Description:</p>
                    <p>Station Range: Start: 10+00.00, End: 24+61.88</p>
                    <p>Stakeout Angle Type: TurnedPlus</p>
                    <p>Occupied Pt: Northing 1,523,542.333, Easting 506,335.861</p>
                    <p>BackSight Pt: Northing 1,523,551.986, Easting 506,139.591</p>
                    <p>Station Increment: 50.00</p>
                    <p>Offset: 0.00</p>
                    <table class="w-full h-[222px] mt-[14px] table-fixed border-separate border-spacing-[2px] border border-[#777] text-left">
                        <thead>
                            <tr>
                                <th class="w-[102px] border border-[#777]">Station</th>
                                <th class="w-[148px] border border-[#777]">Turned.Right</th>
                                <th class="w-[100px] border border-[#777]">Distance</th>
                                <th class="w-[158px] border border-[#777]">Coordinate.N</th>
                                <th class="border border-[#777]">Coordinate.E</th>
                            </tr>
                        </thead>
                        <tbody id="stationRows"></tbody>
                    </table>
                </article>
                <div class="w-[11px] flex flex-col items-center bg-[#f1f1f1]">
                    <svg class="w-[5px] h-[12px]" viewBox="0 0 5 12"><path d="M0 7h5L2.500 4z" fill="#888" /></svg>
                    <div class="w-[9px] h-[263px] bg-[#b5b5b5] border border-[#a5a5a5]"></div>
                    <svg class="w-[5px] h-[12px] mt-auto" viewBox="0 0 5 12"><path d="M0 4h5L2.500 7z" fill="#222" /></svg>
                </div>
            </div>
        </section>

        <!-- pointer -->
        <svg class="absolute left-[545px] top-[44px] w-[36px] h-[46px]" viewBox="0 0 36 46">
            <circle cx="8" cy="7" r="5" fill="#b3242c" />
            <path d="M10 8v12l3-3 2 4 2-1-2-4h4z" fill="#fff" stroke="#222" stroke-width=".8" />
            <rect x="17" y="22" width="14" height="21" rx="7" fill="#e4e4e8" stroke="#8a8a92" />
            <path d="M17.500 32v-3q0-6 6-6.500V32z" fill="#8fb4e6" /><path d="M17 32h14M24 22v10" stroke="#8a8a92" />
        </svg>
    </main>

    <script>
        // level, kind (report / s / toolbox), expander, label
        const tree = [
            [0, 'report', '-', 'Reports Manager'],
            [1, 'report', '-', 'Alignment'],
            [2, 'report', '', 'Alignment_Curve'],
            [2, 'report', '', 'Alignment Design'],
            [2, 'report', '', 'General_Legal_Des'],
            [2, 'report', '', 'Incremental Statio'],
            [2, 'report', '', 'PI Station Report'],
            [2, 'report', '', 'Stakeout Alignmen'],
            [2, 'report', '', 'Station_and_Curve'],
            [1, 'report', '+', 'Corridor'],
            [1, 'report', '+', 'Parcel'],
            [1, 'report', '+', 'Pipes'],
            [1, 'report', '+', 'Points'],
            [1, 'report', '+', 'Profile'],
            [1, 'report', '+', 'Surface'],
            [1, 'report', '+', 'Breakline'],
            [0, 's', '', 'Subscription Extension M'],
            [0, 'toolbox', '+', 'Miscellaneous Utilities']
        ];
        const indent = ['pl-[6px]', 'pl-[19px]', 'pl-[32px]'];
        document.getElementById('reportTree').innerHTML = tree.map(([level, kind, sign, label], i) => {
            const icon = kind === 's'
                ? '<span class="w-[11px] shrink-0 text-center text-[11px] font-bold text-[#0d3f70] bg-[#e1ecf5]">S</span>'
                : '<svg class="size-[11px] shrink-0"><use href="#' + kind + '" /></svg>';
            const box = sign
                ? '<svg class="w-[13px] h-[14px] shrink-0" viewBox="0 0 13 14"><path d="M1 4.500h6v6H1z" fill="#fff" stroke="#999" /><path d="M2.500 7.500h3' + (sign === '+' ? 'M4 6v3' : '') + '" stroke="#222" /><path d="M8 7.500h4M4 0v3M4 12v2" stroke="#aaa" stroke-dasharray="1 1" /></svg>'
                : '<svg class="w-[13px] h-[14px] shrink-0" viewBox="0 0 13 14"><path d="M4.500 0v14M5 7.500h7" stroke="#aaa" stroke-dasharray="1 1" /></svg>';
            return '<li class="flex items-center h-[14px] whitespace-nowrap ' + indent[level] + '">' + box + icon +
                '<span class="ml-[3px] pl-[1px] py-[2px]' + (i === 7 ? ' bg-[#999] flex-1' : '') + '">' + label + '</span></li>';
        }).join('');

        const stations = [
            ['10+00.00', '180°00\'00"', "240.974'", "1,523,530.496'", "506,576.544'"],
            ['10+50.00', '180°00\'00"', "190.974'", "1,523,532.952'", "506,526.604'"],
            ['11+00.00', '180°00\'00"', "140.974'", "1,523,535.408'", "506,476.665'"],
            ['11+50.00', '180°00\'00"', "90.974'", "1,523,537.864'", "506,426.725'"],
            ['12+00.00', '180°00\'00"', "40.974'", "1,523,540.320'", "506,376.785'"],
            ['12+50.00', '1°43\'26"', "9.025'", "1,523,543.047'", "506,326.865'"],
            ['13+00.00', '11°16\'24"', "58.646'", "1,523,556.609'", "506,278.979'"],
            ['13+50.00', '20°49\'21"', "106.642'", "1,523,585.092'", "506,238.167'"],
            ['14+00.00', '30°22\'18"', "151.683'", "1,523,625.361'", "506,208.920'"],
            ['14+50.00', '39°55\'16"', "192.520'", "1,523,672.982'", "506,194.459'"],
            ['15+00.00', '49°28\'13"', "228.021'", "1,523,722.714'", "506,196.376'"]
        ];
        document.getElementById('stationRows').innerHTML = stations.map(row =>
            '<tr>' + row.map(cell => '<td class="border border-[#777]">' + cell + '</td>').join('') + '</tr>'
        ).join('');

        const star = 'M6 1l2 3H4zM6 11l2-3H4zM1 6l3-2v4zM11 6L8 4v4z';
        const tools = [
            ['M1 2h9M2 2v8M2 10L10 2M6 6l4 5', '#4a7ea8'], ['M1 10h10M1 10L9 2M2 2l4 4', '#4a7ea8'],
            ['M3 1q8 3 7 9H3L7 6z', '#4a7ea8'], ['M2 1l2 10 6-8M2 3h4', '#555'],
            ['M1 1h6v10H1zM5 5h3l3 2v4H6', '#444'], ['M6 1a5 5 0 1 0 .1 0M1 6h10M6 6h5v4H6z', '#247a96'],
            ['M6 1a5 5 0 1 0 .1 0M6 1v10M3 4h6M3 8h6', '#333'], [star, '#333'],
            [star + 'M8 8l3 3', '#333'], [star + 'M7 5h4v5', '#333'],
            [star + 'M7 7l4 4', '#222'], ['M1 10l3-6 6-3v5l-4 4zM1 10l5-5', '#6d8bb0'],
            ['M1 2h6v9M7 2q5 1 3 5H7', '#b5484a'], null,
            [star + 'M9 8v3', '#333'], ['M3 1v6M1 5h4M6 4q6-1 5 3t-5 2', '#5a7fa6'],
            ['M1 4h6M4 1v6M8 7q3-1 3 2t-4 2', '#444'], [star, '#444'], null,
            ['M1 1v10M1 7h10M9 3v8', '#3b78a8'], ['M1 1v10h10M3 9L9 2v9', '#3b78a8'],
            ['M1 1v10h10M1 3l9 6M4 8l6-6', '#3b78a8'], ['M1 8L8 1M4 11l7-7M7 9h4', '#3b6b94'],
            ['M6 1a5 5 0 1 0 .1 0M6 6h4v4', '#a77a28'], ['M1 6l5-3 4-2-1 5-4 5zM3 7l6-2', '#a8792a'],
            ['M1 11Q2 3 11 2M5 6h6v5H5z', '#35688f']
        ];
        document.getElementById('drawTools').innerHTML = tools.map(t => t
            ? '<button type="button" aria-label="Drawing tool" class="flex-1 flex items-center"><svg class="size-[12px]" viewBox="0 0 12 12"><path d="' + t[0] + '" fill="none" stroke="' + t[1] + '" /></svg></button>'
            : '<div class="w-[14px] h-[3px] border-b border-[#aaa]"></div>').join('');

        // drafting mode toggles; second value marks the ones switched on
        const modes = [
            ['M5 1v8M1 5h8M8 7h4v4H8z', 0], ['M2 2v8M5 2v8M8 2v8', 0], ['M1 1h10v10H1zM4 1v10M7 1v10M1 4h10M1 7h10', 0],
            ['M2 1v9h9M2 6h4v4', 0], ['M6 2a4 4 0 1 0 4 4H6l5-4', 0], ['M2 2h8v8H2z', 0], ['M2 4h7v7H2zM4 1h7v7', 0],
            ['M1 10L10 2M1 10h10', 1], ['M2 1v9h9M2 10l7-8', 1], ['M5 1v9M1 6h7M9 8h3', 1], ['M6 1v10M1 6h10', 0],
            ['M1 1h10v10H1zM3 1v10M5 1v10M7 1v10M9 1v10', 1], ['M3 2h6v8H3zM6 4v4', 0], ['M3 1v6M1 3h5M5 5h6v6H5z', 0],
            ['M4.500 1h3v3.500H11v3H7.500V11h-3V7.500H1v-3h3.500z', 1]
        ];
        document.getElementById('modeButtons').innerHTML = modes.map((m, i) =>
            '<button type="button" aria-label="Drafting mode" class="' + (i % 5 < 2 ? 'w-[16px]' : 'w-[15px]') + ' flex items-center justify-center border-r border-[#8a8a8a] ' +
            (m[1] ? 'bg-[#b5dbe6]' : 'bg-[#b5b5b5]') + '"><svg class="size-[11px]" viewBox="0 0 12 12"><path d="' + m[0] + '" fill="none" stroke="' + (i === 11 ? '#4a8fc0' : '#333') + '" /></svg></button>'
        ).join('');
    </script>
</body>

</html>
